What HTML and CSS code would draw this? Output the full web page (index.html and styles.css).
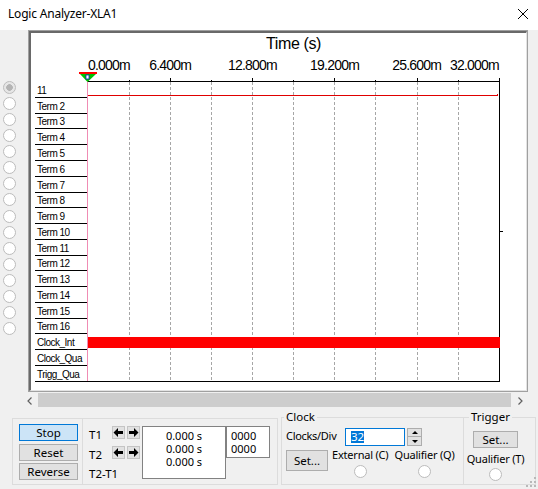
FILE: index.html
```html
<!DOCTYPE html>
<html>
<head>
<meta charset="utf-8">
<title>Logic Analyzer-XLA1</title>
<link rel="stylesheet" href="styles.css">
</head>
<body>
<div class="titlebar">
  <span class="title">Logic Analyzer-XLA1</span>
  <svg class="close" width="10" height="10" viewBox="0 0 10 10"><path d="M0 0L10 10M10 0L0 10" stroke="#000" stroke-width="1" fill="none"/></svg>
</div>

<div class="main">
  <div class="radios">
    <span class="radio checked"></span>
    <span class="radio"></span><span class="radio"></span><span class="radio"></span>
    <span class="radio"></span><span class="radio"></span><span class="radio"></span>
    <span class="radio"></span><span class="radio"></span><span class="radio"></span>
    <span class="radio"></span><span class="radio"></span><span class="radio"></span>
    <span class="radio"></span><span class="radio"></span><span class="radio"></span>
  </div>
  <div class="frame">
    <div class="frame-inner">
      <div class="time-title">Time (s)</div>
      <div class="axis-labels">
        <span class="tick-first">0.000m</span>
        <span class="tick t1">6.400m</span>
        <span class="tick t2">12.800m</span>
        <span class="tick t3">19.200m</span>
        <span class="tick t4">25.600m</span>
        <span class="tick-last">32.000m</span>
      </div>
      <div class="chart">
        <div class="labels">
          <div>11</div><div>Term 2</div><div>Term 3</div><div>Term 4</div><div>Term 5</div>
          <div>Term 6</div><div>Term 7</div><div>Term 8</div><div>Term 9</div><div>Term 10</div>
          <div>Term 11</div><div>Term 12</div><div>Term 13</div><div>Term 14</div><div>Term 15</div>
          <div>Term 16</div><div>Clock_Int</div><div>Clock_Qua</div><div>Trigg_Qua</div>
        </div>
        <svg class="plot" width="417" height="310" viewBox="0 0 417 310">
          <path d="M42.5 9V308M83.5 9V308M124.5 9V308M165.5 9V308M206.5 9V308M247.5 9V308M288.5 9V308M330.5 9V308M371.5 9V308" stroke="#a6a6a6" stroke-width="1" stroke-dasharray="3 2" fill="none"/>
          <path d="M1 8.5H413M412.5 5V309M0 308.5H413M83.5 5V9M165.5 5V9M247.5 5V9M330.5 5V9M42.5 7V9M124.5 7V9M206.5 7V9M288.5 7V9M371.5 7V9M413 158.5H416" stroke="#000" stroke-width="1" fill="none"/>
          <path d="M1 22.5H411M410.5 21V23" stroke="#e00000" stroke-width="1" fill="none"/>
          <rect x="1" y="264" width="412" height="11" fill="#ff0000"/>
          <path d="M0.5 8V308" stroke="#f08cb4" stroke-width="1" fill="none"/>
          <rect x="-8" y="-1" width="18" height="2" fill="#ff0000"/>
          <polygon points="-7,1 9,1 0.5,9" fill="#00c000"/>
          <rect x="-1" y="2" width="3" height="4" fill="#ffffff" stroke="#1020c0" stroke-width="0.8"/>
        </svg>
      </div>
    </div>
  </div>
</div>

<div class="hscroll">
  <div class="sb-btn"><svg width="6" height="8" viewBox="0 0 6 8"><path d="M4.5 0.5L1 4L4.5 7.5" stroke="#606060" stroke-width="1.2" fill="none"/></svg></div>
  <div class="sb-thumb"></div>
  <div class="sb-btn"><svg width="6" height="8" viewBox="0 0 6 8"><path d="M1.5 0.5L5 4L1.5 7.5" stroke="#606060" stroke-width="1.2" fill="none"/></svg></div>
</div>

<div class="bottom">
  <div class="group g-run">
    <div class="btn default">Stop</div>
    <div class="btn">Reset</div>
    <div class="btn">Reverse</div>
  </div>
  <div class="group g-t">
    <div class="tl">T1</div>
    <div class="arrows">
      <span class="abtn"><svg width="11" height="11" viewBox="0 0 11 11"><path d="M0.5 5.5L5 1V4H10V7H5V10Z" fill="#000"/></svg></span>
      <span class="abtn"><svg width="11" height="11" viewBox="0 0 11 11"><path d="M10.5 5.5L6 1V4H1V7H6V10Z" fill="#000"/></svg></span>
    </div>
    <div class="readout"><div>0.000 s</div><div>0.000 s</div><div>0.000 s</div></div>
    <div class="count"><div>0000</div><div>0000</div></div>
    <div class="tl">T2</div>
    <div class="arrows">
      <span class="abtn"><svg width="11" height="11" viewBox="0 0 11 11"><path d="M0.5 5.5L5 1V4H10V7H5V10Z" fill="#000"/></svg></span>
      <span class="abtn"><svg width="11" height="11" viewBox="0 0 11 11"><path d="M10.5 5.5L6 1V4H1V7H6V10Z" fill="#000"/></svg></span>
    </div>
    <div class="tl tdiff">T2-T1</div>
  </div>
  <fieldset class="g-clock">
    <legend>Clock</legend>
    <div class="clock-row1">
      <span class="cd-label">Clocks/Div</span>
      <span class="spinbox"><span class="sel">32</span></span>
      <span class="spin"><span class="up"></span><span class="down"></span></span>
    </div>
    <div class="clock-row2">
      <div class="btn set-btn">Set...</div>
      <div class="opt opt-ext"><span>External (C)</span><span class="radio"></span></div>
      <div class="opt opt-q"><span>Qualifier (Q)</span><span class="radio"></span></div>
    </div>
  </fieldset>
  <fieldset class="g-trig">
    <legend>Trigger</legend>
    <div class="trig-body">
      <div class="btn trig-set">Set...</div>
      <span class="trig-q">Qualifier (T)</span>
      <span class="radio"></span>
    </div>
  </fieldset>
</div>

<svg class="grip" width="11" height="11" viewBox="0 0 11 11">
  <rect x="8" y="0" width="2" height="2" fill="#b8b8b8"/>
  <rect x="4" y="4" width="2" height="2" fill="#b8b8b8"/>
  <rect x="8" y="4" width="2" height="2" fill="#b8b8b8"/>
  <rect x="0" y="8" width="2" height="2" fill="#b8b8b8"/>
  <rect x="4" y="8" width="2" height="2" fill="#b8b8b8"/>
  <rect x="8" y="8" width="2" height="2" fill="#b8b8b8"/>
</svg>
</body>
</html>
```

FILE: styles.css
```css
* { box-sizing: border-box; }
html, body { margin: 0; padding: 0; }
body {
  width: 538px;
  height: 489px;
  background: #f0f0f0;
  font-family: "Noto Sans", "Open Sans", sans-serif;
  font-size: 11px;
  color: #000;
  overflow: hidden;
  position: relative;
}

/* title bar */
.titlebar {
  height: 30px;
  background: #fff;
  display: flex;
  justify-content: space-between;
  align-items: flex-start;
  padding: 0 10px 0 8px;
}
.title { margin-top: 6px; font-size: 12px; line-height: 16px; letter-spacing: -0.2px; }
.close { margin-top: 9px; display: block; }

/* main area */
.main { display: flex; height: 362px; }
.radios {
  width: 28px;
  padding: 50.5px 0 0 3px;
  display: flex;
  flex-direction: column;
  gap: 3.13px;
}
.radio {
  display: block;
  width: 13px;
  height: 13px;
  border-radius: 50%;
  border: 1px solid #bcbcbc;
  background: #fff;
  flex: none;
}
.radio.checked {
  background: radial-gradient(circle, #b4b4b4 0 3px, #e6e6e6 3.6px);
}

.frame {
  width: 500px;
  border: 1px solid #a0a0a0;
}
.frame-inner {
  height: 100%;
  background: #fff;
  border-style: solid;
  border-width: 2px 1px 1px 2px;
  border-color: #696969 #e3e3e3 #e3e3e3 #696969;
  padding-left: 4px;
}
.time-title {
  height: 25px;
  margin-left: 53px;
  width: 411px;
  padding-top: 1.5px;
  text-align: center;
  font-family: "Liberation Sans", Arial, sans-serif;
  font-size: 16px;
  line-height: 18px;
  letter-spacing: -0.4px;
}
.axis-labels {
  display: grid;
  grid-template-columns: repeat(10, 41.1px);
  height: 15px;
  margin-left: 53px;
  font-family: "Liberation Sans", Arial, sans-serif;
  font-size: 14px;
  line-height: 15px;
  letter-spacing: -0.8px;
  white-space: nowrap;
}
.tick-first { grid-column: 1 / 2; justify-self: start; }
.tick { justify-self: center; }
.t1 { grid-column: 2 / 4; }
.t2 { grid-column: 4 / 6; }
.t3 { grid-column: 6 / 8; }
.t4 { grid-column: 8 / 10; }
.tick-last { grid-column: 10 / 11; justify-self: end; }

.chart { display: flex; height: 310px; }
.labels {
  width: 52px;
  flex: none;
  padding-top: 9.2px;
  display: grid;
  grid-template-rows: repeat(19, 15.78px);
  font-family: "Liberation Sans", Arial, sans-serif;
  font-size: 10px;
  line-height: 11px;
  letter-spacing: -0.5px;
  white-space: nowrap;
}
.labels div {
  border-bottom: 1px solid #000;
  display: flex;
  align-items: flex-end;
  padding: 0 0 1px 2px;
}
.plot { flex: none; overflow: visible; display: block; }

/* scrollbar */
.hscroll {
  display: flex;
  height: 17px;
  margin-left: 21px;
  width: 507px;
}
.sb-btn {
  width: 17px;
  display: flex;
  align-items: center;
  justify-content: center;
}
.sb-btn svg { display: block; }
.sb-thumb {
  flex: 1;
  margin-top: 1px;
  height: 14px;
  background: #cdcdcd;
}

/* bottom controls */
.bottom {
  display: flex;
  padding-left: 12px;
  height: 80px;
  align-items: flex-start;
}
.group {
  border: 1px solid #dcdcdc;
  margin-top: 9px;
  height: 67px;
}
.btn {
  background: #e1e1e1;
  border: 1px solid #adadad;
  display: flex;
  align-items: center;
  justify-content: center;
  font-size: 11.5px;
  line-height: 15px;
  white-space: nowrap;
}
.btn.default { background: #cce4f7; border-color: #0078d7; }

.g-run {
  width: 71px;
  padding: 5px 0 0 6px;
  display: grid;
  grid-template-rows: repeat(3, 17px);
  row-gap: 2.5px;
  align-content: start;
}
.g-run .btn { width: 59px; }

.g-t {
  border-left: none;
  width: 195px;
  display: grid;
  grid-template-columns: 23px 30px 84px 44px;
  grid-template-rows: 20px 19px 20px;
  padding: 7px 0 0 6px;
}
.tl { line-height: 13px; padding-top: 2px; white-space: nowrap; font-size: 11.5px; }
.tdiff { grid-column: 1 / 3; }
.arrows { display: flex; gap: 2px; align-items: flex-start; }
.abtn {
  width: 13px;
  height: 13px;
  background: #e1e1e1;
  border: 1px solid #c4c4c4;
  display: flex;
  align-items: center;
  justify-content: center;
}
.abtn svg { display: block; }
.readout {
  grid-column: 3;
  grid-row: 1 / 4;
  height: 53px;
  border: 1px solid #828282;
  background: #fff;
  text-align: center;
  padding-top: 1.5px;
}
.readout div, .count div { height: 13.3px; line-height: 13px; }
.count {
  grid-column: 4;
  grid-row: 1 / 3;
  height: 32px;
  border: 1px solid #828282;
  background: #fff;
  padding: 1.5px 0 0 4px;
}

fieldset {
  margin: 0;
  padding: 0;
  border: 1px solid #dcdcdc;
  min-width: 0;
  height: 76px;
}
legend {
  padding: 0 2px;
  line-height: 16px;
  font-size: 11.5px;
}
.g-clock {
  margin-left: 3px;
  width: 182px;
  border-right: none;
}
.g-clock legend { margin-left: 2px; }
.clock-row1 { display: flex; margin-top: 3px; align-items: flex-start; }
.cd-label { width: 59px; margin-left: 4px; line-height: 16px; white-space: nowrap; letter-spacing: -0.3px; }
.spinbox {
  width: 60px;
  height: 18px;
  border: 1px solid #0078d7;
  background: #fff;
  padding: 2px 0 0 5px;
}
.sel {
  display: inline-block;
  background: #0078d7;
  color: #fff;
  font-size: 11.5px;
  line-height: 12px;
  height: 12px;
  vertical-align: top;
}
.spin {
  margin-left: 2px;
  width: 15px;
  height: 18px;
  display: flex;
  flex-direction: column;
}
.spin span {
  height: 9px;
  background: #e1e1e1;
  border: 1px solid #adadad;
  display: flex;
  align-items: center;
  justify-content: center;
}
.spin .down { border-top: none; }
.spin .up::after {
  content: "";
  border-left: 3px solid transparent;
  border-right: 3px solid transparent;
  border-bottom: 3px solid #000;
}
.spin .down::after {
  content: "";
  border-left: 3px solid transparent;
  border-right: 3px solid transparent;
  border-top: 3px solid #000;
}
.clock-row2 { display: flex; margin-top: 4px; align-items: flex-start; }
.set-btn { margin-left: 4px; width: 42px; height: 21px; }
.opt {
  display: flex;
  flex-direction: column;
  align-items: center;
  margin-top: -2px;
  line-height: 14px;
  white-space: nowrap;
  letter-spacing: -0.2px;
}
.opt-ext { margin-left: 4px; }
.opt-q { margin-left: 6px; }
.opt .radio { margin-top: 3px; }

.g-trig { width: 73px; }
.g-trig legend { margin-left: 5px; }
.trig-body {
  width: 63px;
  display: flex;
  flex-direction: column;
  align-items: center;
}
.trig-set { margin-top: 6px; width: 45px; height: 17px; }
.trig-q { margin-top: 4px; line-height: 14px; white-space: nowrap; letter-spacing: -0.2px; }
.g-trig .radio { margin-top: 2px; }

.grip { position: absolute; right: 1px; bottom: 1px; display: block; }
```
